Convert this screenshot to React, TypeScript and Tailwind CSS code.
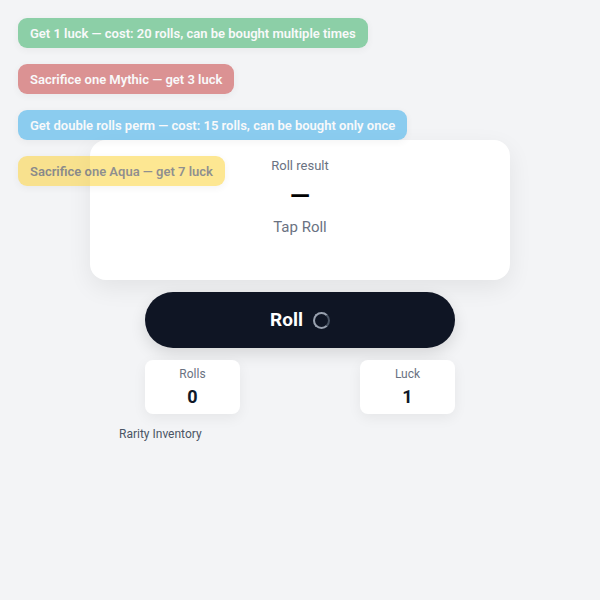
const perks = [
  { label: "Get 1 luck — cost: 20 rolls, can be bought multiple times", cls: "bg-[#27ac5a] text-white" },
  { label: "Sacrifice one Mythic — get 3 luck", cls: "bg-[#c53232] text-white" },
  { label: "Get double rolls perm — cost: 15 rolls, can be bought only once", cls: "bg-[#25a6ea] text-white" },
  { label: "Sacrifice one Aqua — get 7 luck", cls: "bg-[#fdd028] text-[#222]" },
]

function StatBox({ label, value }: { label: string; value: string }) {
  return (
    <div className="w-[95px] h-[54px] bg-white rounded-lg shadow-[0_4px_14px_rgba(0,0,0,0.06)] flex flex-col items-center justify-center">
      <p className="text-[12px] leading-4 text-gray-500">{label}</p>
      <p className="mt-[3px] text-[18px] leading-6 font-bold text-gray-900">{value}</p>
    </div>
  )
}

export default function App() {
  return (
    <div className="relative min-h-[600px] bg-[#f3f4f6] font-['Roboto',sans-serif]">
      {/* Perk buttons floating top-left */}
      <div className="absolute left-[18px] top-[18px] z-10 flex flex-col items-start gap-4">
        {perks.map((p) => (
          <button
            key={p.label}
            disabled
            className={`h-[30px] pt-px px-3 rounded-[9px] text-[13px] font-semibold opacity-50 shadow-[0_2px_6px_rgba(0,0,0,0.08)] ${p.cls}`}
          >
            {p.label}
          </button>
        ))}
      </div>

      <div className="flex flex-col items-center pt-[140px]">
        {/* Result card */}
        <div className="w-[420px] h-[140px] bg-white rounded-2xl shadow-[0_8px_24px_rgba(0,0,0,0.07)] flex flex-col items-center pt-[18px]">
          <p className="text-[13px] leading-4 text-gray-500">Roll result</p>
          <p className="mt-[8px] text-[26px] leading-7 font-bold text-black">—</p>
          <p className="mt-[7px] text-[15px] leading-5 text-gray-500">Tap Roll</p>
        </div>

        {/* Roll button */}
        <button className="mt-3 w-[310px] h-[56px] rounded-full bg-[#0f1524] shadow-[0_6px_16px_rgba(0,0,0,0.12)] flex items-center justify-center gap-[10px]">
          <span className="text-[19px] font-bold text-white">Roll</span>
          <span className="w-[17px] h-[17px] rounded-full border-2 border-gray-400 border-r-gray-600" />
        </button>

        {/* Stats */}
        <div className="mt-3 w-[310px] flex justify-between">
          <StatBox label="Rolls" value="0" />
          <StatBox label="Luck" value="1" />
        </div>

        <div className="w-[362px] mt-3">
          <p className="text-[12px] leading-4 text-gray-600">Rarity Inventory</p>
        </div>
      </div>
    </div>
  )
}
